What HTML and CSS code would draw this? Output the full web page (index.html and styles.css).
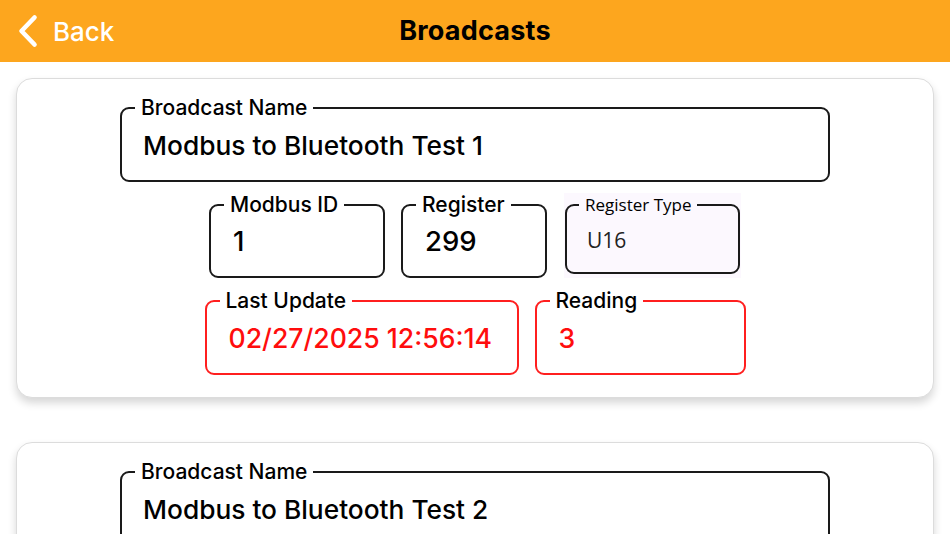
FILE: index.html
```html
<!DOCTYPE html>
<html>
<head>
<meta charset="utf-8">
<link rel="stylesheet" href="styles.css">
</head>
<body>
<header class="topbar">
  <a class="back">
    <svg class="chev" width="24" height="36" viewBox="0 0 24 36"><path d="M18.5 4.5 L5.5 18 L18.5 31.5" fill="none" stroke="#fff" stroke-width="4.6" stroke-linecap="round" stroke-linejoin="round"/></svg>
    <span>Back</span>
  </a>
  <h1 class="title">Broadcasts</h1>
</header>
<main class="list">
  <section class="card">
    <fieldset class="field name">
      <legend>Broadcast Name</legend>
      <div class="value big">Modbus to Bluetooth Test 1</div>
    </fieldset>
    <div class="row">
      <fieldset class="field w-id">
        <legend>Modbus ID</legend>
        <div class="value">1</div>
      </fieldset>
      <fieldset class="field w-reg">
        <legend>Register</legend>
        <div class="value">299</div>
      </fieldset>
      <div class="picker">
        <fieldset class="field w-type">
          <legend>Register Type</legend>
          <div class="value">U16</div>
        </fieldset>
      </div>
    </div>
    <div class="row">
      <fieldset class="field red w-upd">
        <legend>Last Update</legend>
        <div class="value">02/27/2025 12:56:14</div>
      </fieldset>
      <fieldset class="field red w-read">
        <legend>Reading</legend>
        <div class="value">3</div>
      </fieldset>
    </div>
  </section>
  <section class="card">
    <fieldset class="field name">
      <legend>Broadcast Name</legend>
      <div class="value big">Modbus to Bluetooth Test 2</div>
    </fieldset>
  </section>
</main>
</body>
</html>
```
FILE: styles.css
```css
* { box-sizing: border-box; }
html, body { margin: 0; padding: 0; }
body {
  width: 950px;
  height: 534px;
  overflow: hidden;
  background: #fff;
  font-family: Inter, "Noto Sans", sans-serif;
  color: #000;
}
.topbar {
  height: 62px;
  background: #fda61e;
  position: relative;
  display: flex;
  align-items: center;
  justify-content: center;
}
.back {
  position: absolute;
  left: 16px;
  top: 13px;
  display: flex;
  align-items: center;
  gap: 13px;
  color: #fff;
  font-size: 26px;
  font-weight: 500;
}
.chev { display: block; }
.title {
  margin: 0;
  font-size: 27px;
  font-weight: 700;
  letter-spacing: 0.2px;
  padding-bottom: 2px;
}
.list {
  padding: 16px 16px 0;
  display: flex;
  flex-direction: column;
  gap: 44px;
}
.card {
  border: 1px solid #dcdcdc;
  border-radius: 16px;
  background: #fff;
  box-shadow: 0 5px 8px rgba(0,0,0,0.16);
  padding: 17px 0 22px;
  display: flex;
  flex-direction: column;
  align-items: center;
  gap: 11px;
}
.row {
  display: flex;
  gap: 16px;
  align-items: flex-start;
}
.field {
  margin: 0;
  border: 2px solid #1a1a1a;
  border-radius: 9px;
  padding: 0 0 0 19px;
  min-width: 0;
}
.field legend {
  margin-left: -6px;
  padding: 0 6px;
  font-size: 21px;
  font-weight: 500;
  line-height: 24px;
}
.value {
  font-size: 27.5px;
  font-weight: 500;
  line-height: 34px;
  padding: 7px 0 0 3px;
}
.value.big { font-size: 26.3px; padding: 9px 0 0 2px; }
.name { width: 710px; height: 86px; }
.w-id { width: 176px; height: 85px; }
.w-reg { width: 146px; height: 85px; }
.picker {
  background: #fcf8fe;
  padding: 0 1px 4px 1px;
  margin-left: 1px;
}
.w-type {
  width: 175px;
  height: 81px;
  font-family: "Open Sans", "Noto Sans", sans-serif;
}
.w-type legend { font-size: 17px; font-weight: 400; margin-left: -7px; }
.w-type .value { font-size: 21px; font-weight: 400; color: #222; padding: 6px 0 0 1px; }
.red { border-color: #ff1f1f; }
.red .value { color: #ff0d0d; font-size: 26.6px; padding-top: 8px; }
.w-upd { width: 314px; height: 86px; }
.w-read { width: 211px; height: 86px; }
```
